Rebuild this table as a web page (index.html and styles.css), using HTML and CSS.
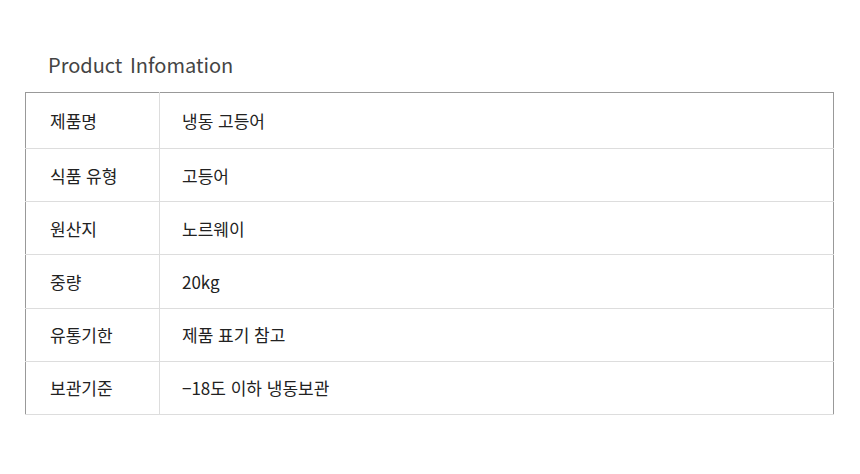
FILE: index.html
```html
<!DOCTYPE html>
<html lang="ko">

<head>
    <meta charset="UTF-8">
    <meta name="viewport" content="width=device-width, initial-scale=1.0">
    <title>Product Infomation</title>
    <link rel="stylesheet" href="styles.css">
</head>

<body>
    <div class="container">
        <h2 class="title">Product Infomation</h2>
        <table class="info-table">
            <tbody>
                <tr class="first">
                    <th>제품명</th>
                    <td>냉동 고등어</td>
                </tr>
                <tr>
                    <th>식품 유형</th>
                    <td>고등어</td>
                </tr>
                <tr>
                    <th>원산지</th>
                    <td>노르웨이</td>
                </tr>
                <tr>
                    <th>중량</th>
                    <td>20kg</td>
                </tr>
                <tr>
                    <th>유통기한</th>
                    <td>제품 표기 참고</td>
                </tr>
                <tr>
                    <th>보관기준</th>
                    <td>−18도 이하 냉동보관</td>
                </tr>
            </tbody>
        </table>
    </div>
</body>

</html>
```

FILE: styles.css
```css
body {
    font-family: "Noto Sans CJK KR", "Noto Sans", sans-serif;
    margin: 0;
    padding: 0;
    background-color: #fff;
    color: #333;
}

.container {
    padding: 51px 26px 0 25px;
}

.title {
    margin: 0 0 13px 23px;
    font-size: 20px;
    font-weight: 400;
    color: #444;
    line-height: 28px;
    word-spacing: 2px;
}

.info-table {
    width: 100%;
    border-collapse: collapse;
    border: 1px solid #999;
    table-layout: fixed;
}

.info-table th,
.info-table td {
    height: 52.2px;
    padding: 0;
    text-align: left;
    font-size: 17px;
    font-weight: 400;
    color: #222;
    border-bottom: 1px solid #ddd;
}

.info-table tr.first th,
.info-table tr.first td {
    height: 55px;
}

.info-table th {
    width: 109px;
    padding-left: 24px;
    border-right: 1px solid #ddd;
}

.info-table td {
    padding-left: 22px;
}
```
